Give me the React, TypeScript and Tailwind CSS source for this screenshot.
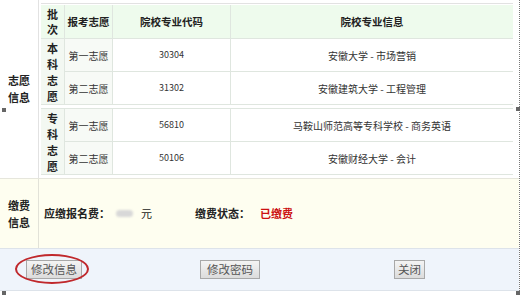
import React from "react";

const font = { fontFamily: '"Noto Sans CJK SC", "Noto Sans", sans-serif' };

type Row = { code: string; wish: string; info: string };

const benke: Row[] = [
  { wish: "第一志愿", code: "30304", info: "安徽大学 - 市场营销" },
  { wish: "第二志愿", code: "31302", info: "安徽建筑大学 - 工程管理" },
];
const zhuanke: Row[] = [
  { wish: "第一志愿", code: "56810", info: "马鞍山师范高等专科学校 - 商务英语" },
  { wish: "第二志愿", code: "50106", info: "安徽财经大学 - 会计" },
];

function Batch({ label, rows, first }: { label: string; rows: Row[]; first?: boolean }) {
  return (
    <div className={`grid grid-cols-[24px_48px_118px_1fr] ${first ? "" : "mt-[3px] border-t border-[#dfe6df]"}`}>
      <div className="row-span-2 flex flex-col items-center justify-center border-r border-b border-[#dfe6df] bg-[#f3f8f2] text-[11px] font-bold leading-[16px] text-[#222]">
        {label.split("").map((c, i) => (
          <span key={i}>{c}</span>
        ))}
      </div>
      {rows.map((r) => (
        <React.Fragment key={r.code}>
          <div className="flex h-[33px] items-center justify-center border-r border-b border-[#dfe6df] bg-[#f7faf6] text-[10px] text-[#333]">
            {r.wish}
          </div>
          <div className="flex h-[33px] items-center justify-center border-r border-b border-[#dfe6df] bg-white text-[9px] text-[#333]">
            {r.code}
          </div>
          <div className="flex h-[33px] items-center justify-center whitespace-pre border-b border-[#dfe6df] bg-white text-[10px] text-[#333]">
            {r.info}
          </div>
        </React.Fragment>
      ))}
    </div>
  );
}

function Btn({ children, className = "" }: { children: React.ReactNode; className?: string }) {
  return (
    <button
      className={`flex h-[19px] items-center justify-center border border-[#a8a8a8] bg-gradient-to-b from-[#f4f4f4] to-[#dcdcdc] text-[11.5px] leading-none text-[#555] ${className}`}
    >
      {children}
    </button>
  );
}

export default function App() {
  return (
    <div className="relative h-[297px] w-[521px] overflow-hidden bg-white" style={font}>
      <div className="w-[520px] border-r border-dotted border-[#777]">
        {/* 志愿信息 */}
        <div className="flex h-[178px]">
          <div className="flex w-[39px] items-center justify-center border-r border-[#e2e2e2] text-center text-[11px] font-bold leading-[17px] text-[#222]">
            志愿
            <br />
            信息
          </div>
          <div className="flex-1 pt-[3px] pl-[2px] pr-[6px]">
            <div className="border-t border-[#e2e2e2] pt-[1px]">
              <div className="grid grid-cols-[24px_48px_118px_1fr] border-b border-[#dfe6df] bg-[#eefbed]">
                <div className="flex h-[33px] flex-col items-center justify-center border-r border-[#dfe6df] text-[11px] font-bold leading-[15px] text-[#222]">
                  <span>批</span>
                  <span>次</span>
                </div>
                <div className="flex items-center justify-center border-r border-[#dfe6df] text-[10.5px] font-bold text-[#222]">
                  报考志愿
                </div>
                <div className="flex items-center justify-center border-r border-[#dfe6df] text-[10.5px] font-bold text-[#222]">
                  院校专业代码
                </div>
                <div className="flex items-center justify-center text-[10.5px] font-bold text-[#222]">
                  院校专业信息
                </div>
              </div>
              <Batch label="本科志愿" rows={benke} first />
              <Batch label="专科志愿" rows={zhuanke} />
            </div>
          </div>
        </div>

        {/* 缴费信息 */}
        <div className="flex h-[70px] border-t border-[#e6e6dc] bg-[#fefef0]">
          <div className="flex w-[39px] items-center justify-center border-r border-[#e2e2d8] text-center text-[11px] font-bold leading-[17px] text-[#222]">
            缴费
            <br />
            信息
          </div>
          <div className="flex flex-1 items-center pl-[5px] text-[11px] text-[#222]">
            <span className="font-bold">应缴报名费：</span>
            <span className="ml-[6px] h-[7px] w-[17px] rounded-sm bg-[#d8d8d8] blur-[1px]" />
            <span className="ml-[8px]">元</span>
            <span className="ml-[43px] font-bold">缴费状态：</span>
            <span className="ml-[10px] font-bold text-[#cc1111]">已缴费</span>
          </div>
        </div>

        {/* 按钮 */}
        <div className="flex h-[43px] items-center border-t border-b border-[#dde3ea] bg-[#eff4fb] pl-[26px]">
          <div className="relative">
            <Btn className="w-[56px]">修改信息</Btn>
            <div className="pointer-events-none absolute -left-[11px] -top-[6px] h-[30px] w-[74px] rounded-[50%] border-2 border-[#c0282c]" />
          </div>
          <Btn className="ml-[118px] w-[60px]">修改密码</Btn>
          <Btn className="ml-[134px] w-[31px]">关闭</Btn>
        </div>
      </div>

      {/* selection handles */}
      <div className="absolute left-[2px] top-[108px] h-[4px] w-[4px] bg-[#666]" />
      <div className="absolute left-[516px] top-[107px] h-[4px] w-[4px] bg-[#666]" />
      <div className="absolute left-[2px] top-[291px] h-[4px] w-[4px] bg-[#666]" />
      <div className="absolute left-[516px] top-[291px] h-[4px] w-[4px] bg-[#666]" />
    </div>
  );
}
